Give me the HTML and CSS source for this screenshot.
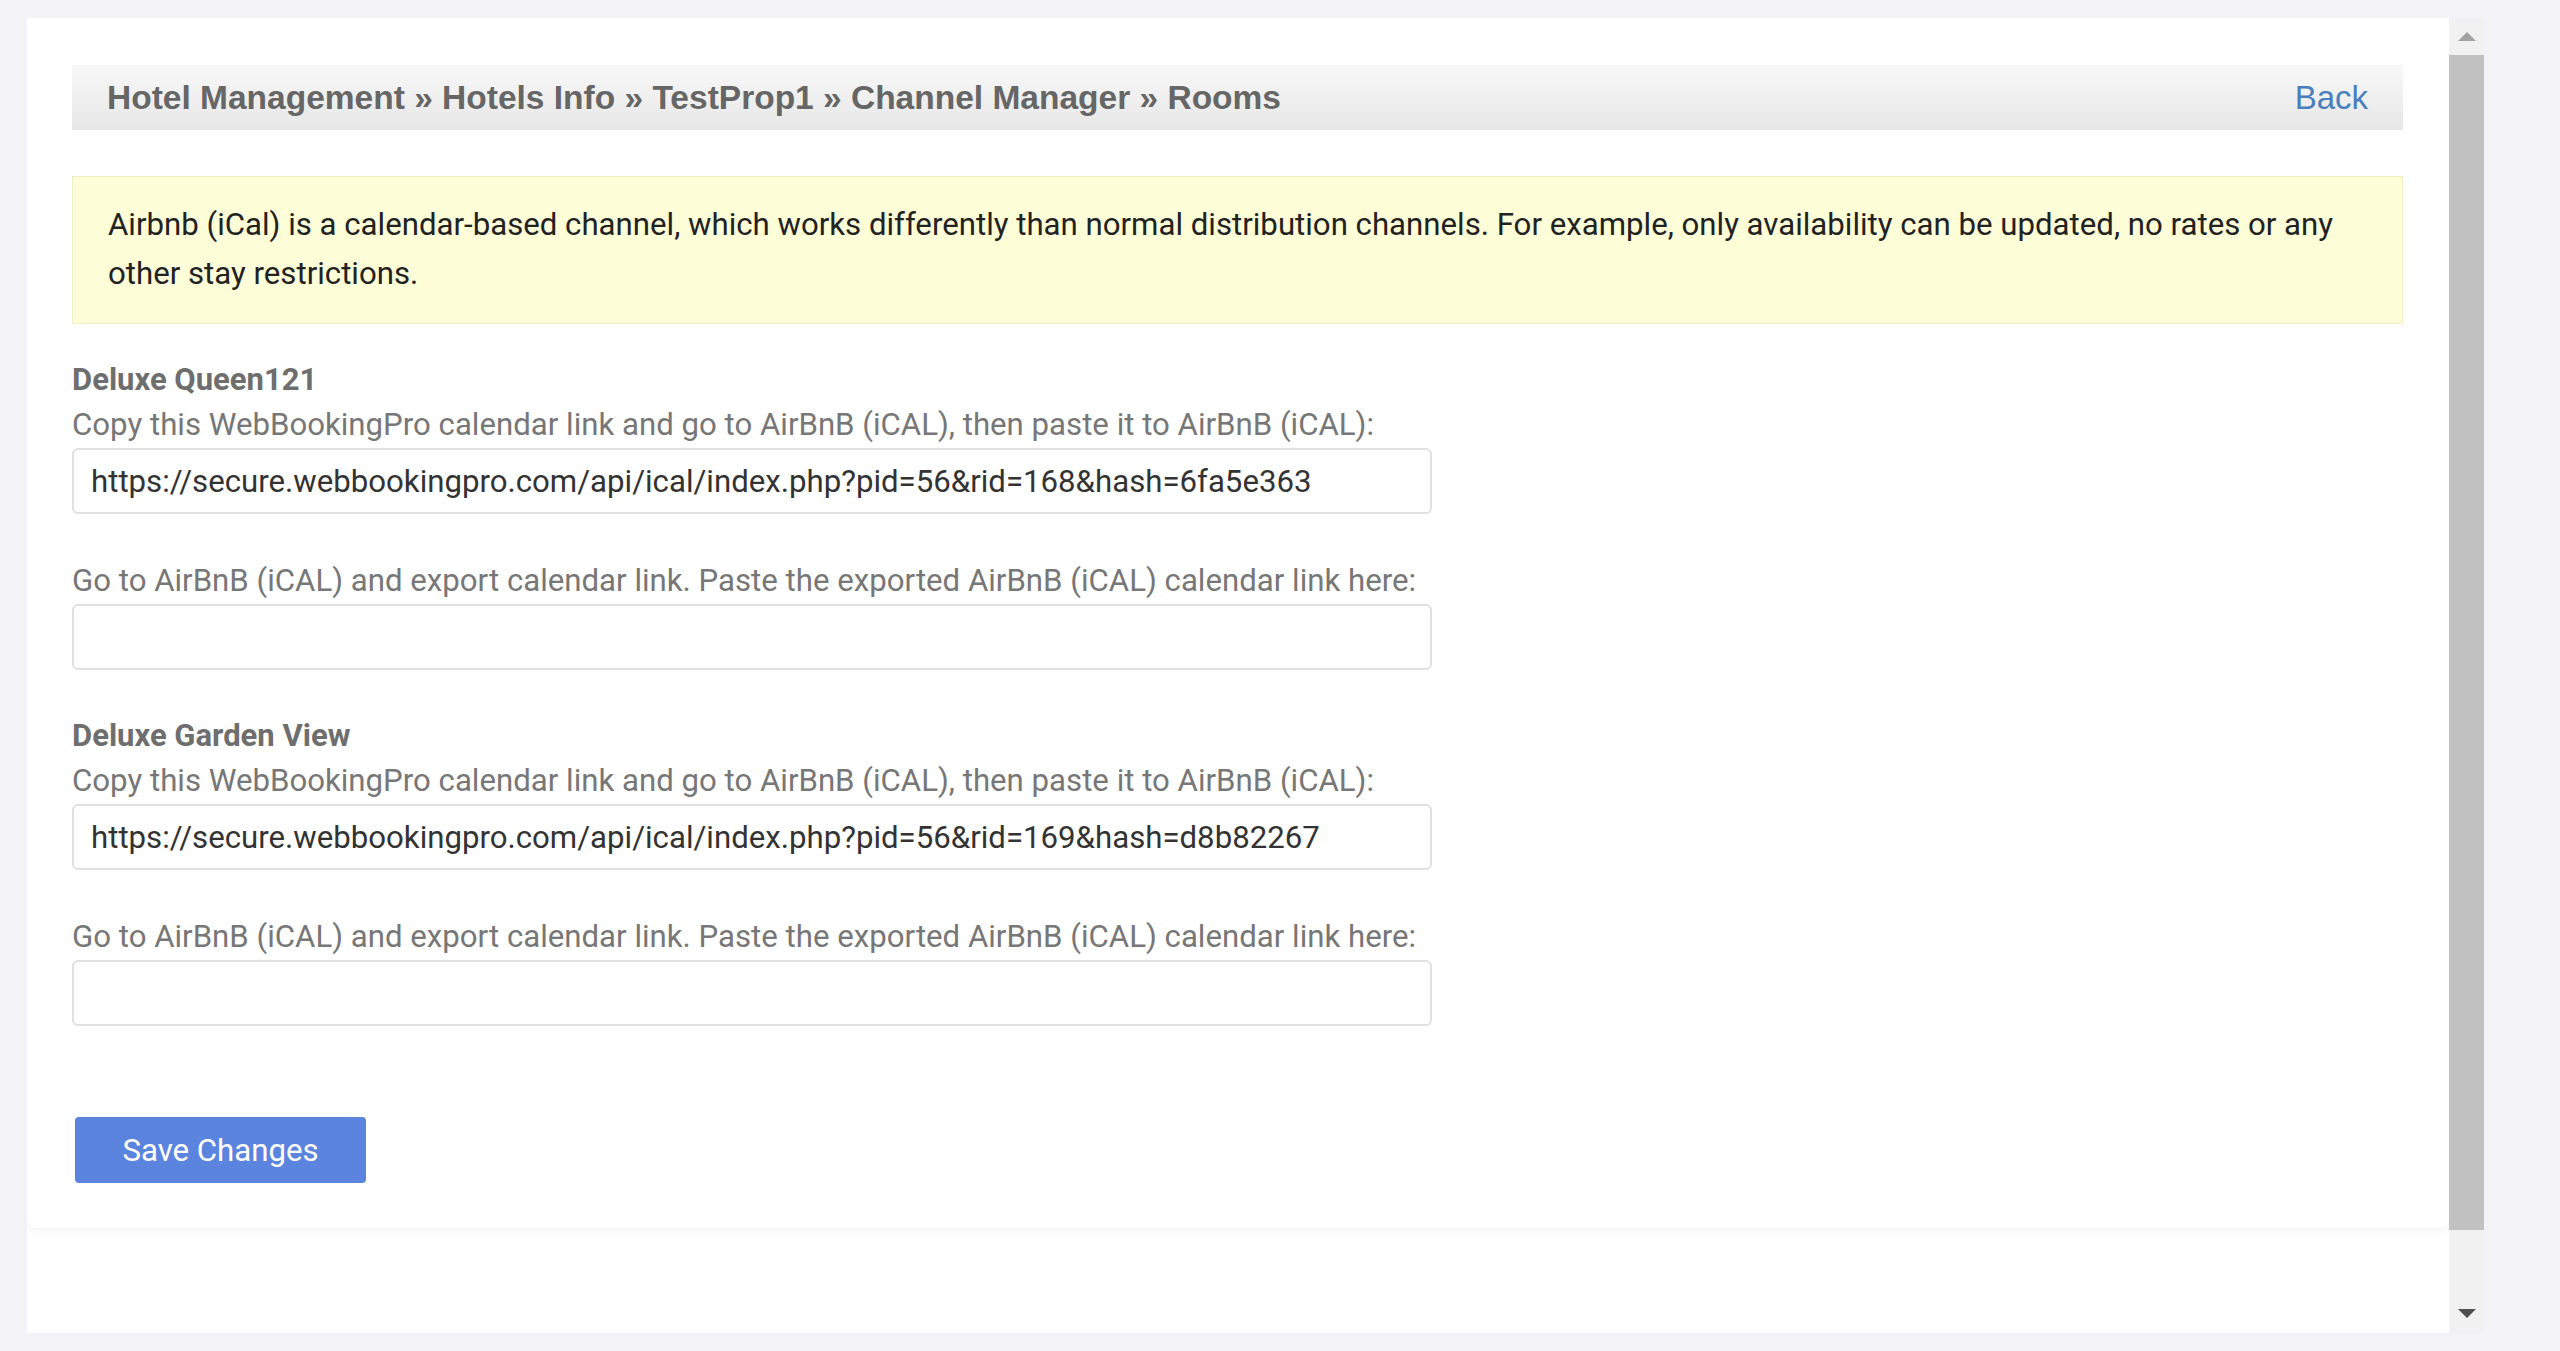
FILE: index.html
```html
<!DOCTYPE html>
<html lang="en">
<head>
  <meta charset="UTF-8">
  <title>Channel Manager - Rooms</title>
  <link rel="stylesheet" href="styles.css">
</head>
<body>

  <div class="frame">
    <div class="content">
      <div class="card">

        <div class="crumbs">
          <span>Hotel Management &raquo; Hotels Info &raquo; TestProp1 &raquo; Channel Manager &raquo; Rooms</span>
          <a href="#" class="back">Back</a>
        </div>

        <div class="notice">
          Airbnb (iCal) is a calendar-based channel, which works differently than normal distribution channels. For example, only availability can be updated, no rates or any other stay restrictions.
        </div>

        <!-- Room 1 -->
        <div class="room">
          <div class="room-title">Deluxe Queen121</div>
          <div class="field">
            <label>Copy this WebBookingPro calendar link and go to AirBnB (iCAL), then paste it to AirBnB (iCAL):</label>
            <input type="text" value="https://secure.webbookingpro.com/api/ical/index.php?pid=56&amp;rid=168&amp;hash=6fa5e363">
          </div>
          <div class="field">
            <label>Go to AirBnB (iCAL) and export calendar link. Paste the exported AirBnB (iCAL) calendar link here:</label>
            <input type="text" value="">
          </div>
        </div>

        <!-- Room 2 -->
        <div class="room">
          <div class="room-title">Deluxe Garden View</div>
          <div class="field">
            <label>Copy this WebBookingPro calendar link and go to AirBnB (iCAL), then paste it to AirBnB (iCAL):</label>
            <input type="text" value="https://secure.webbookingpro.com/api/ical/index.php?pid=56&amp;rid=169&amp;hash=d8b82267">
          </div>
          <div class="field">
            <label>Go to AirBnB (iCAL) and export calendar link. Paste the exported AirBnB (iCAL) calendar link here:</label>
            <input type="text" value="">
          </div>
        </div>

        <div class="actions">
          <button class="save-btn">Save Changes</button>
        </div>

      </div>
    </div>

    <div class="scrollbar">
      <div class="sb-btn"><span class="arrow-up"></span></div>
      <div class="sb-thumb"></div>
      <div class="sb-rest"><span class="arrow-down"></span></div>
    </div>
  </div>

</body>
</html>
```

FILE: styles.css
```css
body {
  margin: 0;
  background-color: #f2f2f7;
  font-family: Roboto, "Liberation Sans", Arial, sans-serif;
}

.frame {
  display: flex;
  width: 2457px;
  height: 1315px;
  margin: 18px 0 0 27px;
}

.content {
  flex: 1;
  background-color: #fff;
  overflow: hidden;
}

.card {
  background-color: #fff;
  border-radius: 0 0 9px 9px;
  box-shadow: 0 3px 8px rgba(0, 0, 0, 0.05);
  padding: 47px 46px 45px 45px;
}

/* Breadcrumb bar */
.crumbs {
  display: flex;
  align-items: center;
  justify-content: space-between;
  height: 65px;
  padding: 0 35px 0 35px;
  background: linear-gradient(#f8f8f8, #e7e7e7);
  font-family: "Liberation Sans", Arial, sans-serif;
  font-size: 33.5px;
  font-weight: bold;
  color: #666;
}

.back {
  color: #4a7ebd;
  font-size: 33px;
  font-weight: normal;
  text-decoration: none;
}

/* Yellow info box */
.notice {
  margin: 46px 0 36px;
  padding: 23px 35px 25px;
  background-color: #fdfdd7;
  border: 1px solid #efefc4;
  font-size: 31.2px;
  line-height: 49px;
  color: #222;
}

.room-title {
  font-size: 31px;
  font-weight: bold;
  line-height: 40px;
  color: #6e6e6e;
  margin-bottom: 4px;
}

.field {
  margin-bottom: 46px;
}

.field label {
  display: block;
  font-size: 31.2px;
  line-height: 42px;
  color: #777;
  margin-bottom: 2px;
}

.field input {
  display: block;
  box-sizing: border-box;
  width: 1360px;
  height: 66px;
  padding: 0 17px;
  border: 2px solid #e0e0e0;
  border-radius: 6px;
  font-family: Roboto, sans-serif;
  font-size: 31.2px;
  color: #333;
  background-color: #fff;
  outline: none;
}

.actions {
  padding-top: 45px;
}

.save-btn {
  width: 291px;
  height: 66px;
  margin-left: 3px;
  border: none;
  border-radius: 4px;
  background-color: #5b84de;
  color: #fff;
  font-family: Roboto, sans-serif;
  font-size: 31.2px;
  cursor: pointer;
}

/* Fake scrollbar */
.scrollbar {
  width: 35px;
  display: flex;
  flex-direction: column;
  background-color: #f1f1f1;
}

.sb-btn {
  height: 37px;
  display: flex;
  align-items: center;
  justify-content: center;
}

.sb-thumb {
  height: 1175px;
  background-color: #c1c1c1;
}

.sb-rest {
  flex: 1;
  display: flex;
  align-items: flex-end;
  justify-content: center;
  padding-bottom: 15px;
}

.arrow-up {
  width: 0;
  height: 0;
  border-left: 9px solid transparent;
  border-right: 9px solid transparent;
  border-bottom: 9px solid #a3a3a3;
}

.arrow-down {
  width: 0;
  height: 0;
  border-left: 9px solid transparent;
  border-right: 9px solid transparent;
  border-top: 9px solid #505050;
}
```
